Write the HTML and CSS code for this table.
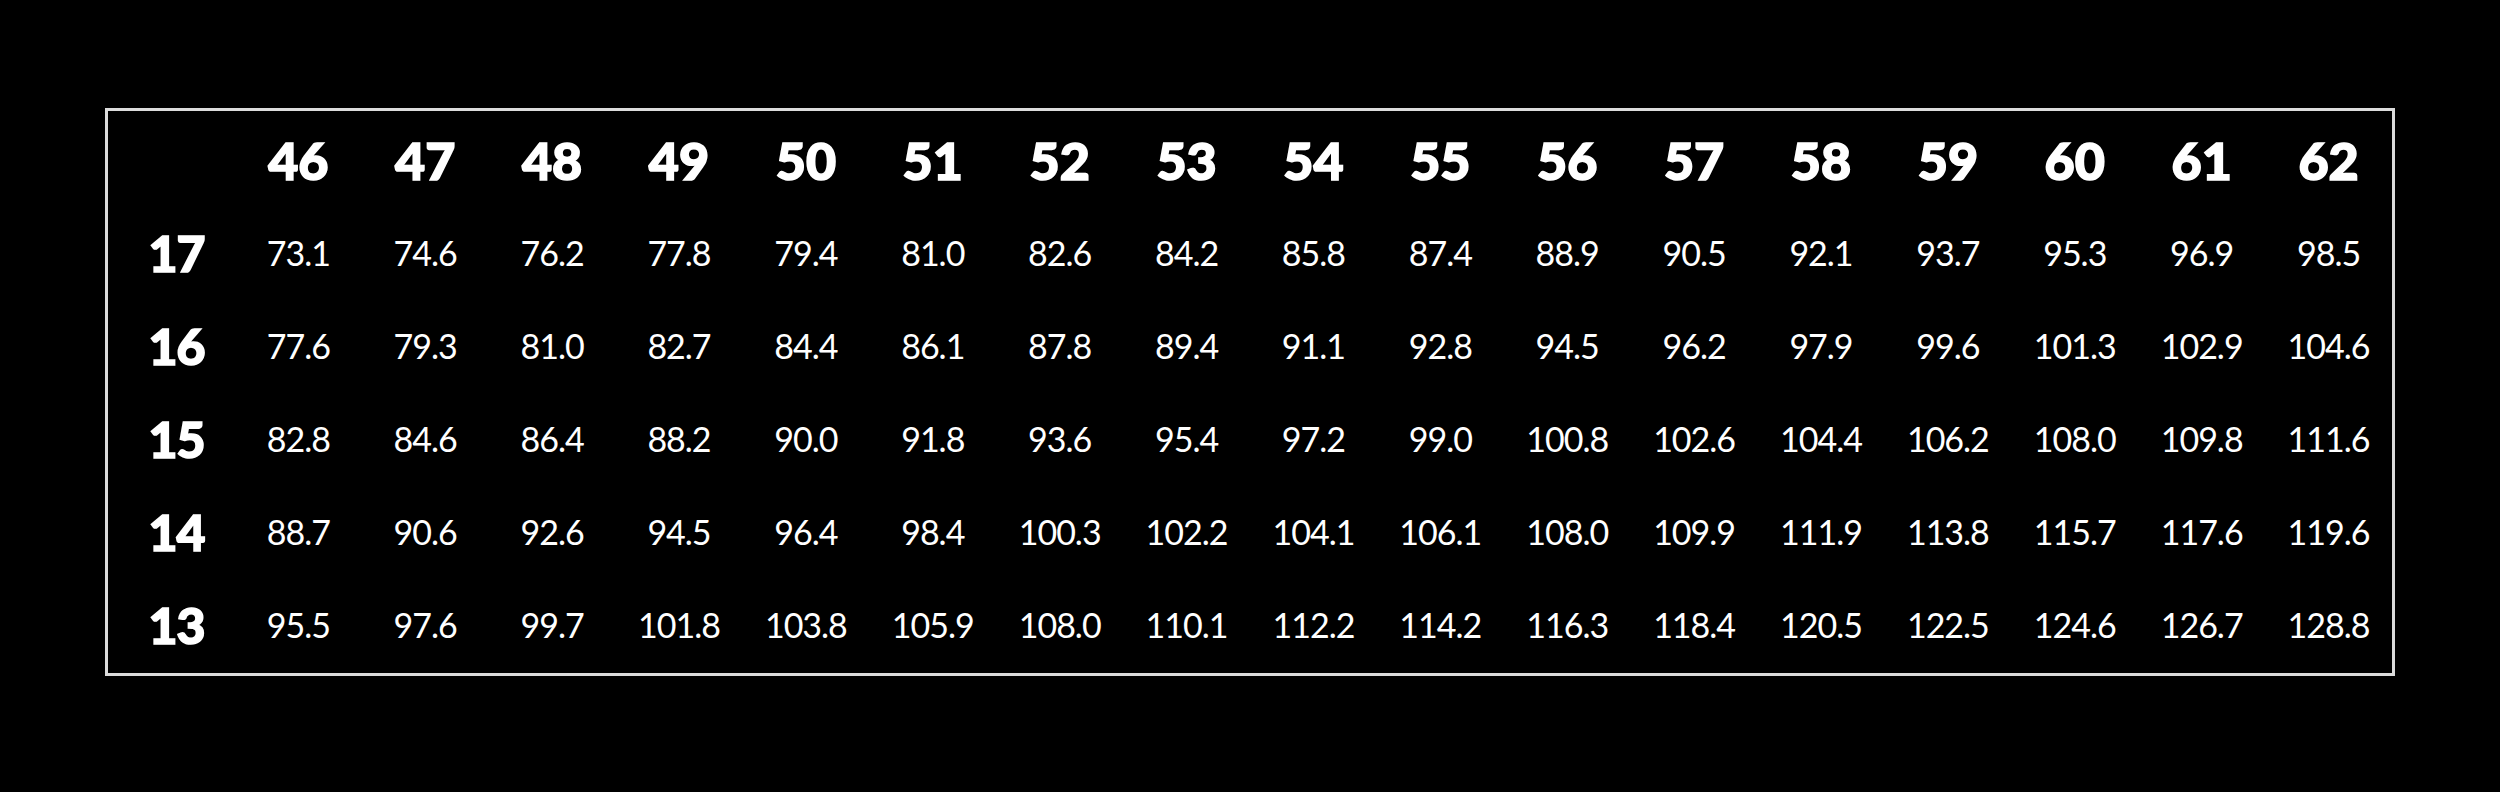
FILE: index.html
```html
<!DOCTYPE html>
<html>
<head>
<meta charset="utf-8">
<link rel="stylesheet" href="styles.css">
</head>
<body>
<div class="page">
  <div class="chart">
    <div class="row head">
      <div class="cell corner"></div>
      <div class="cell">46</div><div class="cell">47</div><div class="cell">48</div><div class="cell">49</div><div class="cell">50</div><div class="cell">51</div><div class="cell">52</div><div class="cell">53</div><div class="cell">54</div><div class="cell">55</div><div class="cell">56</div><div class="cell">57</div><div class="cell">58</div><div class="cell">59</div><div class="cell">60</div><div class="cell">61</div><div class="cell">62</div>
    </div>
    <div class="row">
      <div class="cell label">17</div>
      <div class="cell">73.1</div><div class="cell">74.6</div><div class="cell">76.2</div><div class="cell">77.8</div><div class="cell">79.4</div><div class="cell">81.0</div><div class="cell">82.6</div><div class="cell">84.2</div><div class="cell">85.8</div><div class="cell">87.4</div><div class="cell">88.9</div><div class="cell">90.5</div><div class="cell">92.1</div><div class="cell">93.7</div><div class="cell">95.3</div><div class="cell">96.9</div><div class="cell">98.5</div>
    </div>
    <div class="row">
      <div class="cell label">16</div>
      <div class="cell">77.6</div><div class="cell">79.3</div><div class="cell">81.0</div><div class="cell">82.7</div><div class="cell">84.4</div><div class="cell">86.1</div><div class="cell">87.8</div><div class="cell">89.4</div><div class="cell">91.1</div><div class="cell">92.8</div><div class="cell">94.5</div><div class="cell">96.2</div><div class="cell">97.9</div><div class="cell">99.6</div><div class="cell">101.3</div><div class="cell">102.9</div><div class="cell">104.6</div>
    </div>
    <div class="row">
      <div class="cell label">15</div>
      <div class="cell">82.8</div><div class="cell">84.6</div><div class="cell">86.4</div><div class="cell">88.2</div><div class="cell">90.0</div><div class="cell">91.8</div><div class="cell">93.6</div><div class="cell">95.4</div><div class="cell">97.2</div><div class="cell">99.0</div><div class="cell">100.8</div><div class="cell">102.6</div><div class="cell">104.4</div><div class="cell">106.2</div><div class="cell">108.0</div><div class="cell">109.8</div><div class="cell">111.6</div>
    </div>
    <div class="row">
      <div class="cell label">14</div>
      <div class="cell">88.7</div><div class="cell">90.6</div><div class="cell">92.6</div><div class="cell">94.5</div><div class="cell">96.4</div><div class="cell">98.4</div><div class="cell">100.3</div><div class="cell">102.2</div><div class="cell">104.1</div><div class="cell">106.1</div><div class="cell">108.0</div><div class="cell">109.9</div><div class="cell">111.9</div><div class="cell">113.8</div><div class="cell">115.7</div><div class="cell">117.6</div><div class="cell">119.6</div>
    </div>
    <div class="row">
      <div class="cell label">13</div>
      <div class="cell">95.5</div><div class="cell">97.6</div><div class="cell">99.7</div><div class="cell">101.8</div><div class="cell">103.8</div><div class="cell">105.9</div><div class="cell">108.0</div><div class="cell">110.1</div><div class="cell">112.2</div><div class="cell">114.2</div><div class="cell">116.3</div><div class="cell">118.4</div><div class="cell">120.5</div><div class="cell">122.5</div><div class="cell">124.6</div><div class="cell">126.7</div><div class="cell">128.8</div>
    </div>
  </div>
</div>
</body>
</html>
```
FILE: styles.css
```css
html, body {
  margin: 0;
  padding: 0;
  background: #000;
}
.page {
  width: 2500px;
  height: 792px;
  background: #000;
  padding: 108px 0 0 105px;
  box-sizing: border-box;
}
.chart {
  width: 2290px;
  height: 568px;
  box-sizing: border-box;
  border: 3px solid #dcdcdc;
  padding-top: 2px;
  color: #fff;
  font-family: Lato, "Open Sans", sans-serif;
}
.row {
  display: grid;
  grid-template-columns: repeat(18, 1fr);
  height: 93px;
  align-items: center;
}
.cell {
  text-align: center;
  font-size: 34px;
  font-weight: 400;
  letter-spacing: -1px;
  line-height: 1;
}
.head .cell {
  font-size: 52px;
  font-weight: 900;
  letter-spacing: 0;
  -webkit-text-stroke: 1.6px #fff;
}
.cell.label {
  font-size: 50px;
  font-weight: 900;
  letter-spacing: -1px;
  padding-left: 10px;
  -webkit-text-stroke: 1.6px #fff;
}
```
